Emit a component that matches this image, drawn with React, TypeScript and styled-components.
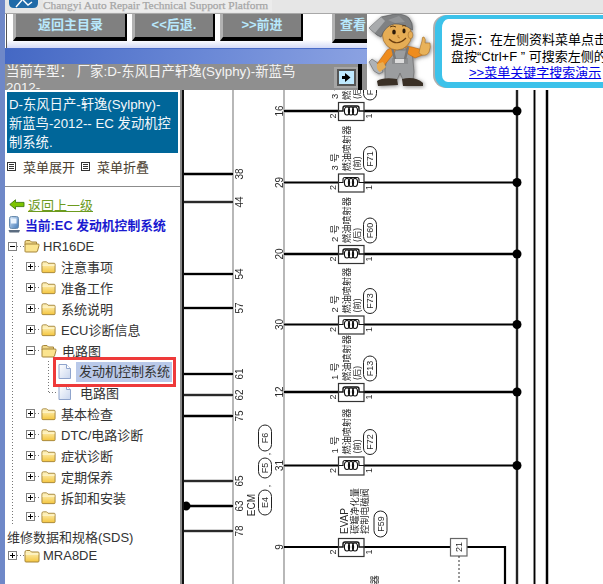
import React from "react";
import styled, { createGlobalStyle } from "styled-components";

const GlobalStyle = createGlobalStyle`
  html, body { margin: 0; padding: 0; background: #fff; }
  body { width: 603px; height: 584px; overflow: hidden; font-family: "Liberation Sans", "Noto Sans CJK SC", sans-serif; font-size: 13px; }
`;

const Page = styled.div`
  display: flex;
  width: 603px;
  height: 584px;
  overflow: hidden;
  background: #fff;
`;
const EdgeStrip = styled.div`
  flex: 0 0 5px;
  background: #6f88c8;
`;
const Main = styled.div`
  flex: 1;
  min-width: 0;
  display: flex;
  flex-direction: column;
`;
const TopBar = styled.div`
  flex: 0 0 13px;
  display: flex;
  align-items: flex-start;
  gap: 5px;
  padding-left: 4px;
  background: #e6e6e6;
  border-bottom: 1px solid #a8a8a8;
  overflow: hidden;
`;
const BrandTitle = styled.div`
  font-family: "Liberation Serif", serif;
  font-weight: normal;
  font-size: 11.4px;
  line-height: 11px;
  height: 12px;
  color: #a6a6a6;
  background: #ececec;
  padding-right: 4px;
  white-space: nowrap;
  -webkit-text-stroke: 0.25px #a6a6a6;
`;
const Header = styled.div`
  flex: 0 0 76px;
  display: flex;
  overflow: hidden;
`;
const HeaderLeft = styled.div`
  flex: 0 0 362px;
  display: flex;
  flex-direction: column;
`;
const Toolbar = styled.div`
  flex: 0 0 34px;
  display: flex;
  align-items: flex-start;
  padding-left: 8px;
  overflow: hidden;
  background: linear-gradient(to bottom, #fff 0, #fff 26px, #d4daf6 34px);
  box-shadow: inset 1px 0 0 #fff, inset 2px 0 0 #555;
`;
const ToolButton = styled.div<{ $w: number; $gap: number; $tall?: boolean }>`
  flex: 0 0 ${(p) => p.$w}px;
  box-sizing: border-box;
  height: ${(p) => (p.$tall ? 29 : 27)}px;
  margin-left: ${(p) => p.$gap}px;
  background: #808080;
  border-left: 3px solid #b2b2b2;
  border-right: 2px solid #000;
  border-bottom: 4px solid #000;
  color: #b8e8fc;
  font-weight: bold;
  font-size: 13px;
  line-height: 22px;
  text-align: center;
  white-space: nowrap;
  overflow: hidden;
`;
const ClippedButton = styled(ToolButton)`
  text-align: left;
  padding-left: 5px;
  border-right: 0;
`;
const BlueBand = styled.div`
  flex: 0 0 16px;
  background: linear-gradient(100deg, #4468c4 0%, #6a88d6 55%, #8ba2e2 100%);
  border-top: 1px solid #4a6cc8;
  box-sizing: border-box;
`;
const VehicleBar = styled.div`
  flex: 0 0 26px;
  display: flex;
  align-items: flex-start;
  background: #8f8f8f;
  overflow: hidden;
`;
const VehicleText = styled.div`
  flex: 0 0 300px;
  padding: 0 0 0 1px;
  color: #f4f4f4;
  font-size: 13.4px;
  line-height: 16px;
`;
const ArrowCell = styled.div`
  margin: 3px 0 0 28px;
  display: flex;
  box-sizing: border-box;
  width: 24px;
  height: 21px;
  align-items: center;
  justify-content: center;
  background: #a6a6a6;
`;
const ArrowFace = styled.div`
  box-sizing: border-box;
  width: 19px;
  height: 17px;
  background: #bfe9ff;
  border: 2px solid #555;
  display: flex;
  align-items: center;
  justify-content: center;
`;
const BlackEdge = styled.div`
  flex: 0 0 4px;
  align-self: stretch;
  background: #000;
`;
const MascotCell = styled.div`
  flex: 0 0 64px;
  height: 76px;
  background: #fff;
`;
const TipBox = styled.div`
  flex: 0 0 230px;
  box-sizing: border-box;
  margin: 1px 0 2px 4px;
  padding: 13px 0 0 9px;
  background: #fff;
  border: solid #3cc2ea;
  border-width: 4px 7px 6px 7px;
  border-radius: 13px;
  box-shadow: -2px 0 0 #b0b0b0;
  white-space: nowrap;
  font-size: 13px;
  line-height: 16.5px;
  color: #000;
`;
const TipLink = styled.a`
  display: block;
  padding-left: 18px;
  color: #0000e6;
  text-decoration: underline;
`;
const Body = styled.div`
  flex: 1;
  display: flex;
  min-height: 0;
`;
const Sidebar = styled.div`
  flex: 0 0 175px;
  box-sizing: border-box;
  width: 175px;
  padding-top: 2px;
  background: #fff;
  color: #333;
  font-size: 13px;
  overflow: hidden;
  position: relative;
`;
const CarTitle = styled.div`
  margin: 0 2px;
  padding: 3px 6px 0 2px;
  height: 61px;
  box-sizing: border-box;
  background: #006699;
  color: #f4f8fb;
  font-size: 13.3px;
  line-height: 19px;
`;
const MenuToggleRow = styled.div`
  display: flex;
  align-items: center;
  height: 18px;
  margin-top: 4px;
  padding-left: 2px;
  color: #4a4030;
`;
const ToggleLabel = styled.span`
  margin: 0 6px 0 7px;
`;
const Divider = styled.div`
  height: 1px;
  margin-top: 11px;
  background: #8c8c8c;
`;
const BackRow = styled.div`
  display: flex;
  align-items: center;
  height: 20px;
  margin-top: 7px;
  padding-left: 4px;
  gap: 3px;
`;
const BackLink = styled.a`
  color: #6d9b1e;
  text-decoration: underline;
`;
const CurrentRow = styled.div`
  display: flex;
  align-items: center;
  height: 20px;
  padding-left: 3px;
  gap: 4px;
  color: #1a1ad0;
  font-weight: bold;
  font-size: 12.8px;
  white-space: nowrap;
`;
const Tree = styled.div`
  margin-top: 2px;
`;
const Guide = styled.div<{ $left: number; $trim: number }>`
  margin-left: ${(p) => p.$left}px;
  padding-left: 1px;
  background: repeating-linear-gradient(to bottom, #777 0 1px, transparent 1px 3px) 0 0 / 1px calc(100% - ${(p) => p.$trim}px) no-repeat;
`;
const Row = styled.div<{ $h?: number; $pad: number }>`
  display: flex;
  align-items: center;
  height: ${(p) => p.$h ?? 21}px;
  padding-left: ${(p) => p.$pad}px;
  white-space: nowrap;
`;
const Expander = styled.span`
  flex: 0 0 9px;
  box-sizing: border-box;
  width: 9px;
  height: 9px;
  border: 1px solid #808080;
  background: #fff;
  position: relative;
`;
const Sign = styled.span<{ $plus?: boolean }>`
  position: absolute;
  left: 1px;
  top: 3px;
  width: 5px;
  height: 1px;
  background: #000;
  &::after {
    content: "";
    display: ${(p) => (p.$plus ? "block" : "none")};
    position: absolute;
    left: 2px;
    top: -2px;
    width: 1px;
    height: 5px;
    background: #000;
  }
`;
const Connector = styled.span<{ $w: number }>`
  flex: 0 0 ${(p) => p.$w}px;
  height: 1px;
  background: repeating-linear-gradient(to right, #777 0 1px, transparent 1px 3px);
`;
const NodeLabel = styled.span<{ $gap: number }>`
  margin-left: ${(p) => p.$gap}px;
`;
const SelectedLabel = styled.span`
  margin-left: 5px;
  padding: 0 2px 0 3px;
  height: 20px;
  line-height: 20px;
  background: #b9c9e9;
`;
const SelectionMark = styled.div`
  position: absolute;
  left: 4px;
  top: -4px;
  box-sizing: border-box;
  width: 123px;
  height: 30px;
  border: 3px solid #ee3a3a;
  pointer-events: none;
`;
const SelectedRow = styled(Row)`
  position: relative;
`;
const Diagram = styled.svg`
  flex: 0 0 419px;
  width: 419px;
  height: 494px;
  display: block;
  background: #fff;
  filter: blur(0.3px);
`;
const DiagramFrame = styled.div`
  flex: 0 0 423px;
  display: flex;
  background: #fff;
  border-left: 2px solid #8a8a8a;
  box-sizing: border-box;
  box-shadow: inset 2px 0 0 #111;
  padding-left: 2px;
`;
const RotText = styled.text<{ $size?: number }>`
  font-family: "Liberation Sans", "Noto Sans CJK SC", sans-serif;
  font-size: ${(p) => p.$size ?? 9.5}px;
  fill: #2a2a2a;
  dominant-baseline: central;
`;

const V = ({ x, y, t, size, anchor = "middle" }: { x: number; y: number; t: string; size?: number; anchor?: "middle" | "start" }) => (
  <RotText x={x} y={y} $size={size} textAnchor={anchor} transform={`rotate(-90 ${x} ${y})`}>
    {t}
  </RotText>
);

const Wire = ({ x1, y1, x2, y2, w = 2 }: { x1: number; y1: number; x2: number; y2: number; w?: number }) => (
  <g>
    <line x1={x1} y1={y1} x2={x2} y2={y2} stroke="#a8a8a8" strokeWidth={w + 1.4} />
    <line x1={x1} y1={y1} x2={x2} y2={y2} stroke="#000" strokeWidth={w} />
  </g>
);

const Pill = ({ x, y1, y2, t }: { x: number; y1: number; y2: number; t: string }) => (
  <g>
    <rect x={x} y={y1} width={13} height={y2 - y1} rx={6.5} fill="#fff" stroke="#222" strokeWidth={1} />
    <V x={x + 6.5} y={(y1 + y2) / 2} t={t} size={9} />
  </g>
);

const Coil = ({ y, w = 2 }: { y: number; w?: number }) => (
  <g>
    <rect x={338.5} y={y - 8.5} width={25.5} height={18} fill="#fff" stroke="#333" strokeWidth={1.2} />
    <path d={`M339 ${y} H343 V${y - 3} Q343 ${y - 5} 345 ${y - 5} H357 Q359 ${y - 5} 359 ${y - 3} V${y} H364`} fill="none" stroke="#111" strokeWidth={w > 2 ? 1.4 : 1.1} />
    <ellipse cx={347} cy={y} rx={2.6} ry={4} fill="none" stroke="#111" strokeWidth={1.1} />
    <ellipse cx={351} cy={y} rx={2.6} ry={4} fill="none" stroke="#111" strokeWidth={1.1} />
    <ellipse cx={355} cy={y} rx={2.6} ry={4} fill="none" stroke="#111" strokeWidth={1.1} />
    <V x={333} y={y + 5} t="2" size={9} />
    <V x={369} y={y + 5} t="1" size={9} />
  </g>
);

const Injector = ({ y, wire, no, pos, pill, w = 2 }: { y: number; wire: string; no: string; pos: string; pill: string; w?: number }) => (
  <g>
    <Wire x1={284} y1={y} x2={517} y2={y} w={w} />
    <circle cx={517} cy={y} r={4.5} fill="#000" />
    <V x={279} y={y} t={wire} size={10} />
    <Coil y={y} w={w} />
    <V x={334} y={y - 12} t={`${no} 号`} size={9.5} anchor="start" />
    <V x={347} y={y - 11} t="燃油喷射器" size={9.2} anchor="start" />
    <V x={357} y={y - 12} t={`(${pos})`} size={8.5} anchor="start" />
    <Pill x={363.5} y1={y - 36} y2={y - 11} t={pill} />
  </g>
);

const leftWires = [
  { y: 174, n: "38", w: 2.2 },
  { y: 202, n: "44", w: 1.6 },
  { y: 274, n: "54", w: 1.8 },
  { y: 308, n: "57", w: 1.8 },
  { y: 374, n: "61", w: 1.8 },
  { y: 395, n: "62", w: 1.6 },
  { y: 416, n: "75", w: 2 },
  { y: 481, n: "65", w: 1.4 },
  { y: 506, n: "63", w: 2 },
  { y: 531, n: "78", w: 1.6 },
];

const injectors = [
  { y: 111, wire: "16", no: "3", pos: "后", pill: "F70", w: 2.2 },
  { y: 182.5, wire: "29", no: "3", pos: "前", pill: "F71", w: 1.6 },
  { y: 254, wire: "20", no: "2", pos: "后", pill: "F60", w: 2.2 },
  { y: 324.5, wire: "30", no: "2", pos: "前", pill: "F73", w: 1.6 },
  { y: 392, wire: "12", no: "1", pos: "后", pill: "F13", w: 2.2 },
  { y: 465.5, wire: "31", no: "1", pos: "前", pill: "F72", w: 1.6 },
];

const WiringDiagram = () => (
  <Diagram viewBox="184 90 419 494">
    <line x1={233} y1={90} x2={233} y2={584} stroke="#a6a6a6" strokeWidth={1.6} />
    <line x1={284} y1={90} x2={284} y2={584} stroke="#a6a6a6" strokeWidth={1.6} />
    {leftWires.map((l) => (
      <g key={l.n}>
        <Wire x1={184} y1={l.y} x2={233} y2={l.y} w={l.w} />
        <V x={239} y={l.y} t={l.n} size={10} />
      </g>
    ))}
    <circle cx={186} cy={506} r={4.5} fill="#000" />
    <Wire x1={517} y1={90} x2={517} y2={584} w={1.6} />
    <Wire x1={534.5} y1={90} x2={534.5} y2={584} w={1.4} />
    <Wire x1={547} y1={90} x2={547} y2={584} w={2} />
    {injectors.map((c) => (
      <Injector key={c.wire} {...c} />
    ))}
    <V x={251.5} y={505} t="ECM" size={10} />
    <Pill x={258.5} y1={490} y2={515} t="E4" />
    <V x={267} y={486} t="," size={9} />
    <Pill x={258.5} y1={458} y2={478} t="F5" />
    <V x={267} y={454} t="," size={9} />
    <Pill x={258.5} y1={425} y2={451} t="F6" />
    <path d="M284 547 H505 V584" fill="none" stroke="#000" strokeWidth={2.2} />
    <V x={279} y={547} t="9" size={10} />
    <Coil y={547} w={2.2} />
    <V x={344} y={534} t="EVAP" size={10} anchor="start" />
    <V x={355} y={534} t="碳罐净化量" size={9.2} anchor="start" />
    <V x={365} y={534} t="控制电磁阀" size={9.2} anchor="start" />
    <Pill x={374} y1={511} y2={537} t="F59" />
    <rect x={450.5} y={538.5} width={16.5} height={17.5} fill="#fff" stroke="#666" strokeWidth={1.2} />
    <V x={459} y={547} t="21" size={9} />
    <line x1={459} y1={556} x2={459} y2={584} stroke="#333" strokeWidth={1} strokeDasharray="2 2" />
    <V x={375} y={580} t="器" size={9.2} />
  </Diagram>
);

const Folder = ({ w = 16 }: { w?: number }) => (
  <svg width={w} height={14} viewBox="0 0 16 14" style={{ flex: `0 0 ${w}px` }}>
    <defs>
      <linearGradient id="fold" x1="0" y1="0" x2="0" y2="1">
        <stop offset="0" stopColor="#fff6c8" />
        <stop offset="1" stopColor="#f4c53e" />
      </linearGradient>
    </defs>
    <path d="M1 3 Q1 1.5 2.5 1.5 H6 L7.5 3 H14 Q15 3 15 4 V12 Q15 13 14 13 H2 Q1 13 1 12 Z" fill="url(#fold)" stroke="#a5853a" strokeWidth={1} />
    <path d="M1.5 5 H14.5" stroke="#fffbe0" strokeWidth={1} />
  </svg>
);

const OpenFolder = () => (
  <svg width={16} height={14} viewBox="0 0 16 14" style={{ flex: "0 0 16px" }}>
    <path d="M1 3 Q1 1.5 2.5 1.5 H6 L7.5 3 H12.5 V6 H1 Z" fill="#f0d88a" stroke="#a5853a" strokeWidth={1} />
    <path d="M1 12.5 L1 6 Q1 5 2 5 H14 Q15.5 5 15 6.5 L13.5 12 Q13.2 13 12 13 H2 Q1 13 1 12.5 Z" fill="#fbe48e" stroke="#a5853a" strokeWidth={1} />
  </svg>
);

const Doc = () => (
  <svg width={13} height={15} viewBox="0 0 13 15" style={{ flex: "0 0 13px" }}>
    <defs>
      <linearGradient id="docf" x1="0" y1="0" x2="1" y2="1">
        <stop offset="0" stopColor="#fff" />
        <stop offset="1" stopColor="#c9d6ee" />
      </linearGradient>
    </defs>
    <path d="M1 .5 H8.5 L12.5 4.5 V14.5 H1 Z" fill="url(#docf)" stroke="#8fa4cc" strokeWidth={1} />
    <path d="M8.5 .5 V4.5 H12.5" fill="#fff" stroke="#8fa4cc" strokeWidth={1} />
  </svg>
);

const MenuGlyph = () => (
  <svg width={9} height={9} viewBox="0 0 9 9" style={{ flex: "0 0 9px" }}>
    <rect x={0.5} y={0.5} width={8} height={8} fill="#fff" stroke="#333" />
    <path d="M2 2.5 H7 M2 4.5 H7 M2 6.5 H7" stroke="#333" strokeWidth={1} />
  </svg>
);

const BackArrow = () => (
  <svg width={16} height={11} viewBox="0 0 16 11">
    <path d="M.8 5.5 L6.5 .8 V3.4 H15 V7.6 H6.5 V10.2 Z" fill="#7cc400" stroke="#3f7a10" strokeWidth={0.9} />
  </svg>
);

const PcIcon = () => (
  <svg width={13} height={17} viewBox="0 0 13 17">
    <defs>
      <linearGradient id="pcg" x1="0" y1="0" x2="1" y2="1">
        <stop offset="0" stopColor="#d6e6f6" />
        <stop offset="1" stopColor="#3f78b8" />
      </linearGradient>
    </defs>
    <rect x={1.5} y={0.5} width={9} height={12} rx={2} fill="url(#pcg)" stroke="#6a8cae" />
    <rect x={3} y={2.5} width={5.5} height={5} fill="#eaf4ff" />
    <path d="M.5 14 H12 L11 16.5 H1.5 Z" fill="#5b6c80" />
  </svg>
);

const Mascot = () => (
  <svg width={64} height={76} viewBox="0 0 64 76" style={{ filter: "drop-shadow(1px 1px 2px rgba(50,50,50,.6))" }}>
    <path d="M7 57 L2 48 L5 45 L12 50 L16 58 L12 60 Z" fill="#aeb2b6" stroke="#666" strokeWidth={0.6} />
    <path d="M21 36 H45 L47 58 L46 66 H36 L33 59 L30 66 H18 L18 56 Z" fill="#9b9d9f" stroke="#666" strokeWidth={0.6} />
    <path d="M25 44 H41 V50 H25 Z" fill="#8b8d8f" />
    <rect x={28} y={45} width={9} height={4} fill="#dcdcdc" />
    <path d="M20 36 L28 32 L28 38 L16 53 L10 50 Z" fill="#ee8c1e" stroke="#a85a10" strokeWidth={0.5} />
    <path d="M38 32 L45 33 L56 36 L58 40 L48 44 L41 40 Z" fill="#ee8c1e" stroke="#a85a10" strokeWidth={0.5} />
    <path d="M25 33 L28 45 M41 33 L38 45" stroke="#777" strokeWidth={2.5} />
    <path d="M10 50 Q9 56 13 58 L19 53 L16 48 Z" fill="#e6ad55" />
    <path d="M53 34 L55 27 Q55 22 57 23 Q59 25 58 29 L63 29 Q64 33 62 38 Q60 42 55 41 L52 39 Z" fill="#e8b25a" stroke="#a6702a" strokeWidth={0.6} />
    <ellipse cx={30} cy={21} rx={14.5} ry={15} fill="#e6ad55" stroke="#96652a" strokeWidth={0.6} />
    <ellipse cx={43.5} cy={21} rx={2.4} ry={3.6} fill="#e6ad55" stroke="#96652a" strokeWidth={0.5} />
    <path d="M10 21 L2 14 L14 3 L28 0 Q38 0 42 4 Q46 9 45.5 16 Q36 9 27 10 Q18 12 14 23 Z" fill="#7f8183" stroke="#4f5052" strokeWidth={0.6} />
    <path d="M2 14 L14 3 L18 7 L8 19 Z" fill="#a9abad" />
    <path d="M21 6 L32 2 L38 8 L28 9 Z" fill="#939597" />
    <ellipse cx={27} cy={18} rx={1.8} ry={2.6} fill="#2a1a0a" />
    <ellipse cx={37} cy={17} rx={1.6} ry={2.4} fill="#2a1a0a" />
    <path d="M23 13 Q26 11 29 13 M35 12 Q37 11 39 12" stroke="#5a3a14" strokeWidth={1} fill="none" />
    <path d="M31 21 Q30 24 33 24" stroke="#a36b22" strokeWidth={0.8} fill="none" />
    <path d="M22 25 Q30 33 39 24" stroke="#6c3f10" strokeWidth={1.2} fill="none" />
    <path d="M10 67 Q16 63 30 65 L31 71 L11 72 Z" fill="#3a3026" />
    <path d="M35 65 Q48 62 56 69 L56 72 L36 72 Z" fill="#3a3026" />
  </svg>
);

type Item = { label: string };
const before: Item[] = [{ label: "注意事项" }, { label: "准备工作" }, { label: "系统说明" }, { label: "ECU诊断信息" }];
const after: Item[] = [{ label: "基本检查" }, { label: "DTC/电路诊断" }, { label: "症状诊断" }, { label: "定期保养" }, { label: "拆卸和安装" }];

const Branch = ({ label, h, open }: { label: string; h?: number; open?: boolean }) => (
  <Row $pad={13} $h={h}>
    <Expander>
      <Sign $plus={!open} />
    </Expander>
    <Connector $w={6} />
    {open ? <OpenFolder /> : <Folder w={15} />}
    {label && <NodeLabel $gap={5}>{label}</NodeLabel>}
  </Row>
);

export default function App() {
  return (
    <Page>
      <GlobalStyle />
      <EdgeStrip />
      <Main>
        <TopBar>
          <svg width={29} height={8} viewBox="0 0 29 8" style={{ flex: "0 0 29px" }}>
            <path d="M0 -4 H29 V3 Q29 8 24 8 H5 Q0 8 0 3 Z" fill="#1f6aa8" />
            <path d="M7 7 L13 0 M14 0 L19 5 L23 2" stroke="#fff" strokeWidth={1.4} fill="none" />
          </svg>
          <BrandTitle>Changyi Auto Repair Technical Support Platform</BrandTitle>
        </TopBar>
        <Header>
          <HeaderLeft>
            <Toolbar>
              <ToolButton $w={114} $gap={0}>返回主目录</ToolButton>
              <ToolButton $w={83} $gap={5}>&lt;&lt;后退.</ToolButton>
              <ToolButton $w={83} $gap={5}>&gt;&gt;前进</ToolButton>
              <ClippedButton $w={35} $gap={29} $tall>查看</ClippedButton>
            </Toolbar>
            <BlueBand />
            <VehicleBar>
              <VehicleText>当前车型： 厂家:D-东风日产轩逸(Sylphy)-新蓝鸟 2012-</VehicleText>
              <ArrowCell>
                <ArrowFace>
                  <svg width={9} height={9} viewBox="0 0 9 9">
                    <path d="M0 3 H3 V0 L8.5 4.5 L3 9 V6 H0 Z" fill="#000" />
                  </svg>
                </ArrowFace>
              </ArrowCell>
              <BlackEdge />
            </VehicleBar>
          </HeaderLeft>
          <MascotCell>
            <Mascot />
          </MascotCell>
          <TipBox>
            提示：在左侧资料菜单点击
            <br />
            盘按“Ctrl+F ” 可搜索左侧的
            <TipLink>&gt;&gt;菜单关键字搜索演示</TipLink>
          </TipBox>
        </Header>
        <Body>
          <Sidebar>
            <CarTitle>D-东风日产-轩逸(Sylphy)-新蓝鸟-2012-- EC 发动机控制系统.</CarTitle>
            <MenuToggleRow>
              <MenuGlyph />
              <ToggleLabel>菜单展开</ToggleLabel>
              <MenuGlyph />
              <ToggleLabel>菜单折叠</ToggleLabel>
            </MenuToggleRow>
            <Divider />
            <BackRow>
              <BackArrow />
              <BackLink>返回上一级</BackLink>
            </BackRow>
            <CurrentRow>
              <PcIcon />
              当前:EC 发动机控制系统
            </CurrentRow>
            <Tree>
              <Row $pad={3} $h={20}>
                <Expander>
                  <Sign />
                </Expander>
                <Connector $w={7} />
                <OpenFolder />
                <NodeLabel $gap={3}>HR16DE</NodeLabel>
              </Row>
              <Guide $left={7} $trim={0}>
                {before.map((b) => (
                  <Branch key={b.label} label={b.label} />
                ))}
                <Branch label="电路图" open />
                <Guide $left={35} $trim={10}>
                  <SelectedRow $pad={9}>
                    <Doc />
                    <SelectedLabel>发动机控制系统</SelectedLabel>
                    <SelectionMark />
                  </SelectedRow>
                  <Row $pad={0}>
                    <Connector $w={9} />
                    <Doc />
                    <NodeLabel $gap={9}>电路图</NodeLabel>
                  </Row>
                </Guide>
                {after.map((b) => (
                  <Branch key={b.label} label={b.label} />
                ))}
                <Branch label="" h={17} />
              </Guide>
              <Row $pad={2} $h={22}>维修数据和规格(SDS)</Row>
              <Row $pad={3} $h={17}>
                <Expander>
                  <Sign $plus />
                </Expander>
                <Connector $w={7} />
                <Folder />
                <NodeLabel $gap={3}>MRA8DE</NodeLabel>
              </Row>
            </Tree>
          </Sidebar>
          <DiagramFrame>
            <WiringDiagram />
          </DiagramFrame>
        </Body>
      </Main>
    </Page>
  );
}
